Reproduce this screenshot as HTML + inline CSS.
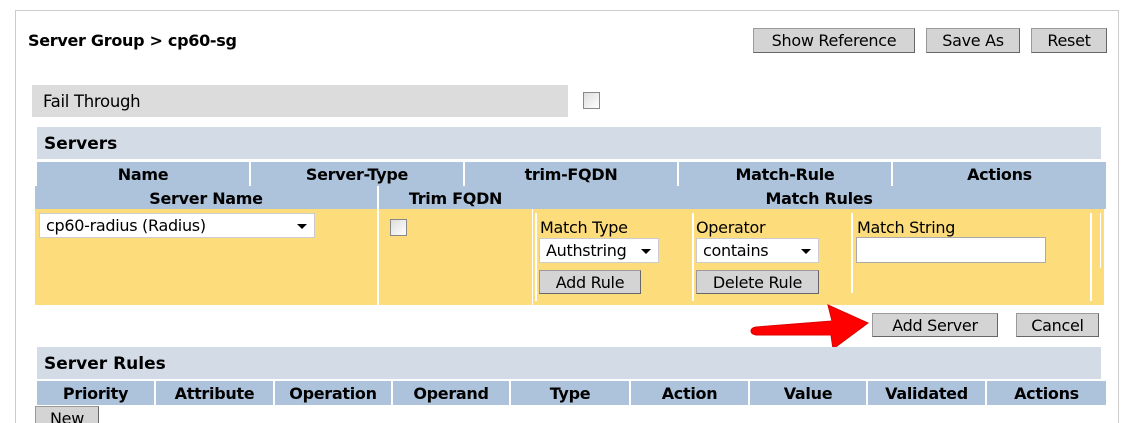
<!DOCTYPE html>
<html style="overflow:hidden;height:423px"><head><style>
body{margin:0;width:1125px;height:423px;overflow:hidden;background:#fff;font-family:"DejaVu Sans","Liberation Sans",sans-serif;font-size:16px;color:#000;position:relative}
.a{position:absolute;box-sizing:border-box}
.btn{position:absolute;box-sizing:border-box;background:#d4d4d4;border:1px solid #9a9a9a;border-bottom-color:#666;border-right-color:#666;font-size:16px;text-align:center;line-height:23px;letter-spacing:-0.3px;overflow:hidden}
.hd{position:absolute;font-weight:bold;text-align:center;font-size:16px;letter-spacing:-0.3px}
.sel{position:absolute;box-sizing:border-box;background:#fff;border:1px solid #ccc;font-size:16px;line-height:24px;padding-left:6px;letter-spacing:-0.3px}
.sel:after{content:"";position:absolute;right:7px;top:10px;border-left:5px solid transparent;border-right:5px solid transparent;border-top:5px solid #000}
.cb{position:absolute;width:17px;height:17px;box-sizing:border-box;border:1px solid #888;background:linear-gradient(135deg,#ddd,#fff)}
.vs{position:absolute;width:2px;background:#fff}
</style></head><body>
<div class="a" style="left:15px;top:10px;width:1104px;height:413px;border:1px solid #ccc;border-bottom:none"></div>
<div class="a" style="left:28px;top:31px;font-weight:bold;font-size:16px;letter-spacing:-0.3px">Server Group &gt; cp60-sg</div>
<div class="btn" style="left:753px;top:28px;width:162px;height:25px">Show Reference</div>
<div class="btn" style="left:926px;top:28px;width:94px;height:25px">Save As</div>
<div class="btn" style="left:1031px;top:28px;width:76px;height:25px">Reset</div>

<div class="a" style="left:32px;top:85px;width:536px;height:32px;background:#dcdcdc;padding:7px 0 0 11px;font-size:16.5px;letter-spacing:-0.3px">Fail Through</div>
<div class="cb" style="left:583px;top:92px"></div>

<div class="a" style="left:37px;top:127px;width:1064px;height:32px;background:#d3dce6;padding:7px 0 0 7px;font-weight:bold;font-size:17px">Servers</div>

<div class="a" style="left:37px;top:162px;width:1069px;height:24px;background:#adc3dc"></div>
<div class="vs" style="left:249px;top:162px;height:24px"></div>
<div class="vs" style="left:463px;top:162px;height:24px"></div>
<div class="vs" style="left:677px;top:162px;height:24px"></div>
<div class="vs" style="left:891px;top:162px;height:24px"></div>
<div class="hd" style="left:37px;top:165px;width:212px">Name</div>
<div class="hd" style="left:251px;top:165px;width:212px">Server-Type</div>
<div class="hd" style="left:465px;top:165px;width:212px">trim-FQDN</div>
<div class="hd" style="left:679px;top:165px;width:212px">Match-Rule</div>
<div class="hd" style="left:893px;top:165px;width:213px">Actions</div>

<div class="a" style="left:35px;top:186px;width:1071px;height:23px;background:#adc3dc"></div>
<div class="vs" style="left:377px;top:186px;height:119px"></div>
<div class="hd" style="left:35px;top:189px;width:342px">Server Name</div>
<div class="hd" style="left:379px;top:189px;width:153px">Trim FQDN</div>
<div class="hd" style="left:532px;top:189px;width:574px">Match Rules</div>

<div class="a" style="left:35px;top:209px;width:1069px;height:96px;background:#fddc7c"></div>
<div class="vs" style="left:377px;top:209px;height:96px"></div>
<div class="vs" style="left:532px;top:209px;height:96px;width:1px"></div>
<div class="vs" style="left:535px;top:213px;height:88px"></div>
<div class="vs" style="left:692px;top:213px;height:88px"></div>
<div class="vs" style="left:851px;top:213px;height:80px"></div>
<div class="vs" style="left:1090px;top:213px;height:88px"></div>
<div class="vs" style="left:1100px;top:213px;height:55px;width:1px"></div>
<div class="sel" style="left:39px;top:213px;width:276px;height:25px">cp60-radius (Radius)</div>
<div class="cb" style="left:390px;top:219px"></div>
<div class="a" style="left:540px;top:218px;letter-spacing:-0.3px">Match Type</div>
<div class="sel" style="left:539px;top:238px;width:120px;height:25px">Authstring</div>
<div class="btn" style="left:539px;top:270px;width:102px;height:24px">Add Rule</div>
<div class="a" style="left:696px;top:218px;letter-spacing:-0.3px">Operator</div>
<div class="sel" style="left:696px;top:238px;width:123px;height:25px">contains</div>
<div class="btn" style="left:696px;top:270px;width:123px;height:24px">Delete Rule</div>
<div class="a" style="left:857px;top:218px;letter-spacing:-0.3px">Match String</div>
<div class="a" style="left:856px;top:237px;width:190px;height:26px;background:#fff;border:1px solid #aaa"></div>

<div class="btn" style="left:872px;top:313px;width:126px;height:24px">Add Server</div>
<div class="btn" style="left:1016px;top:313px;width:83px;height:24px">Cancel</div>
<svg class="a" style="left:740px;top:300px" width="140" height="55"><path d="M11,31 Q11,28 16,27 L92,21 L88,5 L128,23 L93,49 L91,35 L16,35 Q11,34 11,31Z" fill="#f00" stroke="#d00" stroke-width="1"/></svg>

<div class="a" style="left:37px;top:347px;width:1064px;height:32px;background:#d3dce6;padding:7px 0 0 7px;font-weight:bold;font-size:17px">Server Rules</div>
<div class="a" style="left:37px;top:381px;width:1069px;height:24px;background:#adc3dc"></div>
<div class="vs" style="left:154px;top:381px;height:24px"></div>
<div class="vs" style="left:273px;top:381px;height:24px"></div>
<div class="vs" style="left:391px;top:381px;height:24px"></div>
<div class="vs" style="left:509px;top:381px;height:24px"></div>
<div class="vs" style="left:629px;top:381px;height:24px"></div>
<div class="vs" style="left:748px;top:381px;height:24px"></div>
<div class="vs" style="left:866px;top:381px;height:24px"></div>
<div class="vs" style="left:985px;top:381px;height:24px"></div>
<div class="hd" style="left:37px;top:384px;width:117px">Priority</div>
<div class="hd" style="left:156px;top:384px;width:117px">Attribute</div>
<div class="hd" style="left:275px;top:384px;width:116px">Operation</div>
<div class="hd" style="left:393px;top:384px;width:116px">Operand</div>
<div class="hd" style="left:511px;top:384px;width:118px">Type</div>
<div class="hd" style="left:631px;top:384px;width:117px">Action</div>
<div class="hd" style="left:750px;top:384px;width:116px">Value</div>
<div class="hd" style="left:868px;top:384px;width:117px">Validated</div>
<div class="hd" style="left:987px;top:384px;width:119px">Actions</div>
<div class="btn" style="left:35px;top:406px;width:64px;height:17px;border-bottom:none">New</div>
</body></html>
